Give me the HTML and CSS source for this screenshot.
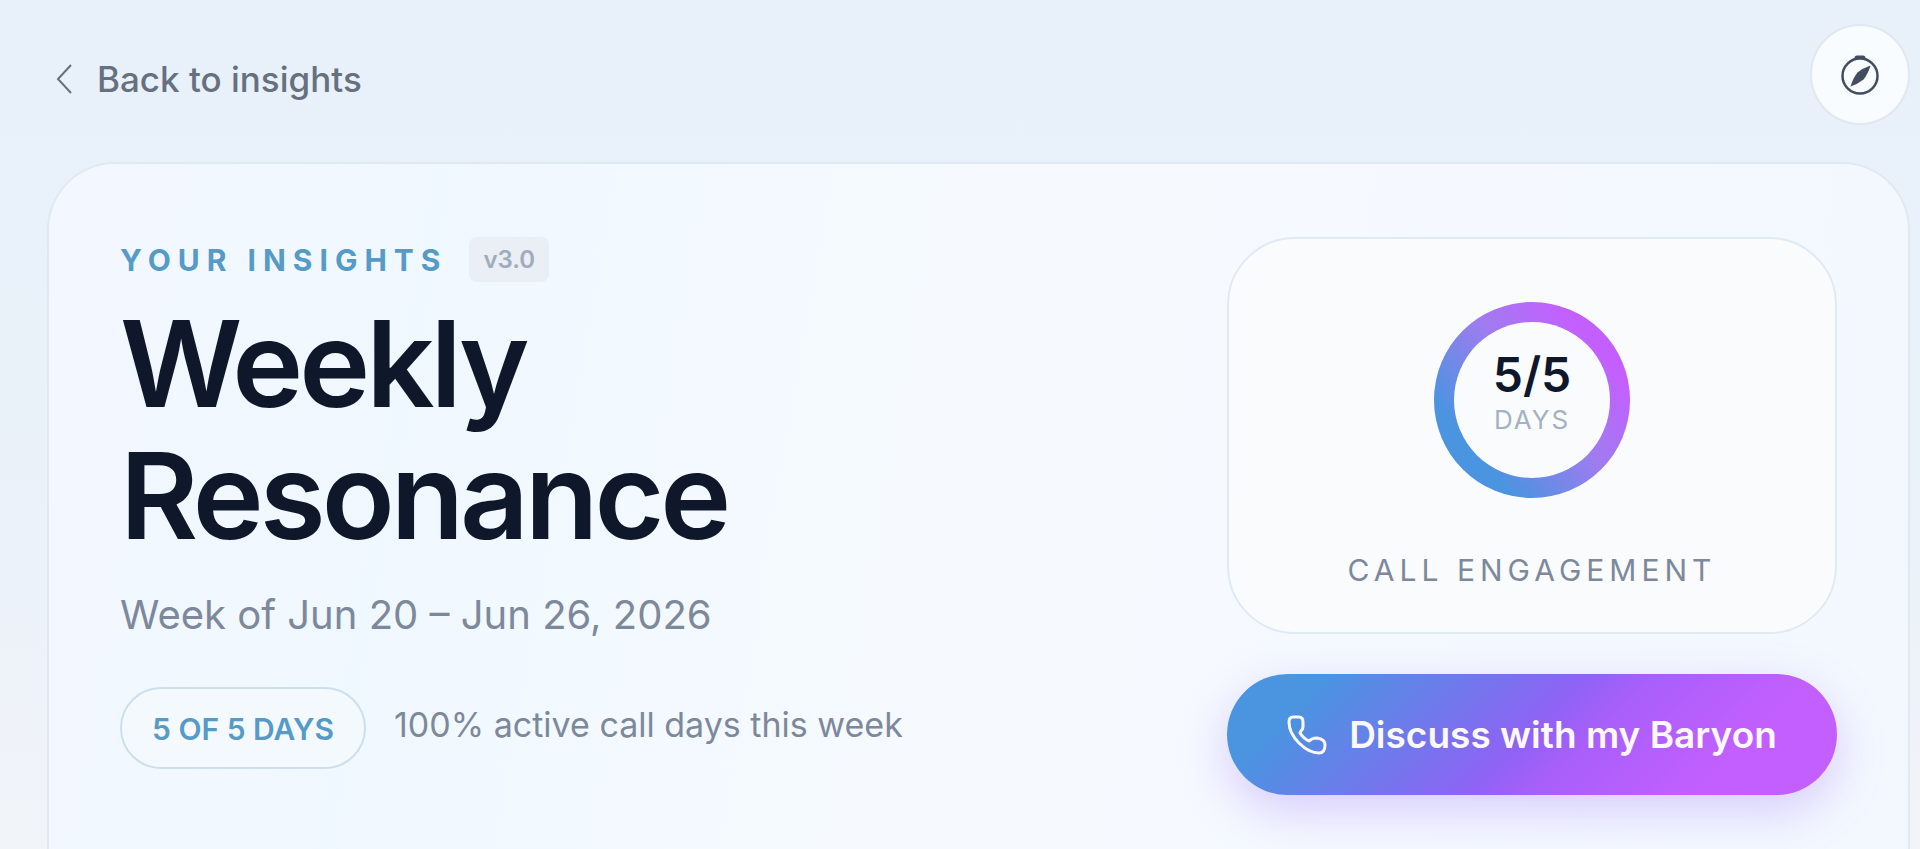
FILE: index.html
```html
<!DOCTYPE html>
<html lang="en">
<head>
    <meta charset="UTF-8">
    <meta name="viewport" content="width=device-width, initial-scale=1.0">
    <title>Weekly Resonance</title>
    <link rel="stylesheet" href="styles.css">
</head>
<body>
    <header class="topbar">
        <a class="back-link" href="#">
            <svg class="back-icon" viewBox="0 0 18 32" aria-hidden="true">
                <path d="M16 2 3 16l13 14"/>
            </svg>
            Back to insights
        </a>
        <button class="compass-button" type="button" aria-label="Explore">
            <svg class="compass-icon" viewBox="0 0 40 42" aria-hidden="true">
                <circle class="compass-ring" cx="20" cy="22" r="17.5"/>
                <path d="M14.500 5.500v-1.500q0-2.500 2.500-2.500h6q2.500 0 2.500 2.500v1.500q-5.500-2-11 0z"/>
                <path d="M30.500 11.500 Q28 20 23.500 25.500 Q18 30 10.500 32.500 Q13 24 17.500 18.500 Q23 14 30.500 11.500z"/>
            </svg>
        </button>
    </header>

    <main class="hero-card">
        <section class="summary">
            <div class="eyebrow-row">
                <span class="eyebrow">YOUR INSIGHTS</span>
                <span class="version">v3.0</span>
            </div>
            <h1>Weekly<br>Resonance</h1>
            <p class="date-range">Week of Jun 20 – Jun 26, 2026</p>
            <div class="activity">
                <span class="days-pill">5 OF 5 DAYS</span>
                <span class="activity-text">100% active call days this week</span>
            </div>
        </section>

        <aside class="side">
            <div class="engagement-card">
                <div class="ring">
                    <strong class="ring-value">5/5</strong>
                    <span class="ring-label">DAYS</span>
                </div>
                <p class="engagement-label">CALL ENGAGEMENT</p>
            </div>
            <button class="discuss-button" type="button">
                <svg class="phone-icon" viewBox="0 0 40 40" aria-hidden="true">
                    <path d="M2 7Q2 2 6 2H12Q16 2 16 7V12Q16 14 14 16L13 18Q16 23 22 26L25 24Q27 23 30 23Q38 24 38 30Q38 38 32 38Q22 38 12 28Q2 18 2 7Z"/>
                </svg>
                Discuss with my Baryon
            </button>
        </aside>
    </main>
</body>
</html>
```
FILE: styles.css
```css
* {
    box-sizing: border-box;
}
body {
    margin: 0;
    min-height: 100vh;
    padding: 24px 10px 0 47px;
    display: flex;
    flex-direction: column;
    gap: 37px;
    background: linear-gradient(180deg, #e8f0fa 0%, #e9f1f9 50%, #f1f4f9 100%);
    color: #0f172a;
    font-family: Inter, "Liberation Sans", sans-serif;
    overflow: hidden;
}
h1, p {
    margin: 0;
}
button {
    font-family: inherit;
    cursor: pointer;
}
.topbar {
    display: flex;
    justify-content: space-between;
    align-items: center;
}
.back-link {
    display: flex;
    align-items: center;
    gap: 24px;
    padding: 8px 8px 0;
    color: #66707f;
    font-size: 35px;
    font-weight: 500;
    text-decoration: none;
}
.back-icon {
    width: 18px;
    height: 32px;
    fill: none;
    stroke: currentColor;
    stroke-width: 2;
}
.compass-button {
    display: grid;
    place-items: center;
    width: 100px;
    height: 101px;
    padding: 0;
    border: 2px solid #e1e8f0;
    border-radius: 50%;
    background: #f9fcff;
    color: #434d60;
}
.compass-icon {
    width: 40px;
    height: 42px;
    fill: currentColor;
}
.compass-ring {
    fill: none;
    stroke: currentColor;
    stroke-width: 2.5;
}
.hero-card {
    flex: 1;
    display: grid;
    grid-template-columns: 1fr 610px;
    align-items: start;
    padding: 73px 71px 0;
    border: 2px solid #e0e9f2;
    border-bottom: 0;
    border-radius: 68px 68px 0 0;
    background: linear-gradient(100deg, #f3f7ff 0%, #f0f8ff 20%, #f6faff 50%, #f3f8ff 100%);
}
.eyebrow-row {
    display: flex;
    align-items: center;
    gap: 22px;
}
.eyebrow {
    color: #569bc7;
    font-size: 30px;
    font-weight: 700;
    letter-spacing: 7px;
}
.version {
    padding: 0 14px;
    border-radius: 8px;
    background: #e9eff5;
    color: #a0acbc;
    font-size: 24px;
    font-weight: 600;
    line-height: 45px;
}
h1 {
    margin-top: 16px;
    font-size: 120px;
    font-weight: 600;
    line-height: 132px;
    letter-spacing: -4px;
}
.date-range {
    margin-top: 25px;
    color: #7d899b;
    font-size: 40px;
    line-height: 56px;
}
.activity {
    display: flex;
    align-items: start;
    gap: 28px;
    margin-top: 44px;
}
.days-pill {
    padding: 2px 30px 0;
    border: 2px solid #cbdfed;
    border-radius: 42px;
    background: #f4f9fd;
    color: #569bc7;
    font-size: 30px;
    font-weight: 600;
    line-height: 76px;
}
.activity-text {
    color: #7d899b;
    font-size: 34px;
    line-height: 76px;
}
.side {
    display: flex;
    flex-direction: column;
    gap: 40px;
}
.engagement-card {
    display: flex;
    flex-direction: column;
    align-items: center;
    gap: 52px;
    padding: 63px 30px 42px;
    border: 2px solid #e0eaf3;
    border-radius: 68px;
    background: #f9fbfd;
}
.ring {
    display: flex;
    flex-direction: column;
    align-items: center;
    gap: 4px;
    width: 196px;
    height: 196px;
    padding-top: 28px;
    border: 20px solid transparent;
    border-radius: 50%;
    background:
        linear-gradient(#f9fbfd, #f9fbfd) padding-box,
        linear-gradient(50deg, #4a94e0 22%, #9f7cf0 54%, #c45fff 80%) border-box;
}
.ring-value {
    font-size: 48px;
    font-weight: 600;
    line-height: 50px;
}
.ring-label {
    color: #a5b1c1;
    font-size: 26px;
    line-height: 32px;
    letter-spacing: 2px;
}
.engagement-label {
    color: #7d899b;
    font-size: 30px;
    line-height: 40px;
    letter-spacing: 5px;
}
.discuss-button {
    display: flex;
    justify-content: center;
    align-items: center;
    gap: 22px;
    height: 121px;
    border: 0;
    border-radius: 61px;
    background: linear-gradient(135deg, #4a94e0 14%, #9062f5 50%, #a85ffa 58%, #c45fff 82%);
    box-shadow: 0 16px 48px rgba(145, 90, 245, 0.28);
    color: #fbf8ff;
    font-size: 37px;
    font-weight: 600;
    white-space: nowrap;
}
.phone-icon {
    width: 40px;
    height: 40px;
    fill: none;
    stroke: currentColor;
    stroke-width: 3;
    stroke-linecap: round;
    stroke-linejoin: round;
}
```
